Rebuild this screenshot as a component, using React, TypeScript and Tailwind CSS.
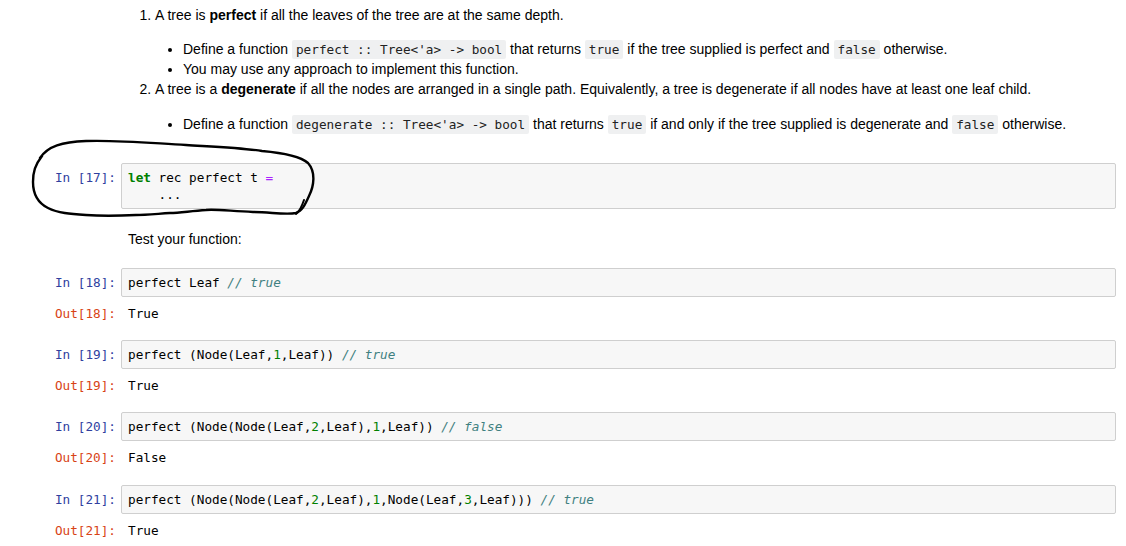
import React from "react"

const mono = "font-['DejaVu_Sans_Mono',monospace] text-[12.7px] leading-[17px]"

function Code({ children }: { children: React.ReactNode }) {
  return (
    <code className={`${mono} rounded-[2px] bg-[#eff0f1] px-[4px] py-[2px] text-[#222]`}>
      {children}
    </code>
  )
}

function InCell({ n, children }: { n: number; children: React.ReactNode }) {
  return (
    <div className="flex items-start">
      <div className={`${mono} w-[116px] pt-[6px] text-right text-[#303f9f]`}>In [{n}]:</div>
      <div
        className={`${mono} ml-[5px] w-[995px] rounded-[2px] border border-[#cfcfcf] bg-[#f7f7f7] px-[6px] py-[5px] whitespace-pre text-black`}
      >
        {children}
      </div>
    </div>
  )
}

function OutCell({ n, children }: { n: number; children: React.ReactNode }) {
  return (
    <div className="mt-[8px] flex">
      <div className={`${mono} w-[116px] text-right text-[#d84315]`}>Out[{n}]:</div>
      <div className={`${mono} ml-[12px] text-black`}>{children}</div>
    </div>
  )
}

const Cm = ({ children }: { children: React.ReactNode }) => (
  <span className="italic text-[#408080]">{children}</span>
)
const Num = ({ children }: { children: React.ReactNode }) => (
  <span className="text-[#008000]">{children}</span>
)

export default function App() {
  return (
    <div className="relative h-[546px] w-[1126px] overflow-hidden bg-white font-['Liberation_Sans',Arial,sans-serif] text-[14px] leading-[20px] text-black">
      <div className="pt-[5px] pl-[128px]">
        <ol className="list-decimal pl-[27px]">
          <li>
            A tree is <b>perfect</b> if all the leaves of the tree are at the same depth.
            <ul className="mt-[14px] list-disc pl-[28px]">
              <li>
                Define a function <Code>perfect :: Tree&lt;'a&gt; -&gt; bool</Code> that returns{" "}
                <Code>true</Code> if the tree supplied is perfect and <Code>false</Code> otherwise.
              </li>
              <li>You may use any approach to implement this function.</li>
            </ul>
          </li>
          <li>
            A tree is a <b>degenerate</b> if all the nodes are arranged in a single path. Equivalently, a
            tree is degenerate if all nodes have at least one leaf child.
            <ul className="mt-[15px] list-disc pl-[28px]">
              <li>
                Define a function <Code>degenerate :: Tree&lt;'a&gt; -&gt; bool</Code> that returns{" "}
                <Code>true</Code> if and only if the tree supplied is degenerate and <Code>false</Code>{" "}
                otherwise.
              </li>
            </ul>
          </li>
        </ol>
      </div>

      <div className="mt-[29px]">
        <InCell n={17}>
          <span className="font-bold text-[#008000]">let</span> rec perfect t{" "}
          <span className="text-[#aa22ff]">=</span>
          {"\n    ..."}
        </InCell>
      </div>

      <div className="mt-[20px] pl-[128px]">Test your function:</div>

      <div className="mt-[19px]">
        <InCell n={18}>
          perfect Leaf <Cm>// true</Cm>
        </InCell>
        <OutCell n={18}>True</OutCell>
      </div>

      <div className="mt-[18px]">
        <InCell n={19}>
          perfect (Node(Leaf,<Num>1</Num>,Leaf)) <Cm>// true</Cm>
        </InCell>
        <OutCell n={19}>True</OutCell>
      </div>

      <div className="mt-[18px]">
        <InCell n={20}>
          perfect (Node(Node(Leaf,<Num>2</Num>,Leaf),<Num>1</Num>,Leaf)) <Cm>// false</Cm>
        </InCell>
        <OutCell n={20}>False</OutCell>
      </div>

      <div className="mt-[19px]">
        <InCell n={21}>
          perfect (Node(Node(Leaf,<Num>2</Num>,Leaf),<Num>1</Num>,Node(Leaf,<Num>3</Num>,Leaf))){" "}
          <Cm>// true</Cm>
        </InCell>
        <OutCell n={21}>True</OutCell>
      </div>

      <svg
        className="pointer-events-none absolute top-0 left-0"
        width="1126"
        height="546"
        viewBox="0 0 1126 546"
        fill="none"
      >
        <path
          d="M40 158 C48 146 62 142 86 141 C120 140 150 143 186 145 C220 147 245 148 262 151 C285 153 300 156 308 163 C316 172 314 186 309 196 C305 205 302 211 296 213 C285 215 270 212 253 212 C230 211 215 209 206 210 C190 211 180 213 170 213 C155 214 145 215 136 215 C115 216 100 216 86 215 C70 214 58 213 48 208 C38 203 33 195 33 182 C33 172 35 165 42 156"
          stroke="#000"
          strokeWidth="2.4"
          strokeLinecap="round"
        />
        <path d="M304 200 C302 206 300 211 296 214" stroke="#000" strokeWidth="2" strokeLinecap="round" />
      </svg>
    </div>
  )
}
